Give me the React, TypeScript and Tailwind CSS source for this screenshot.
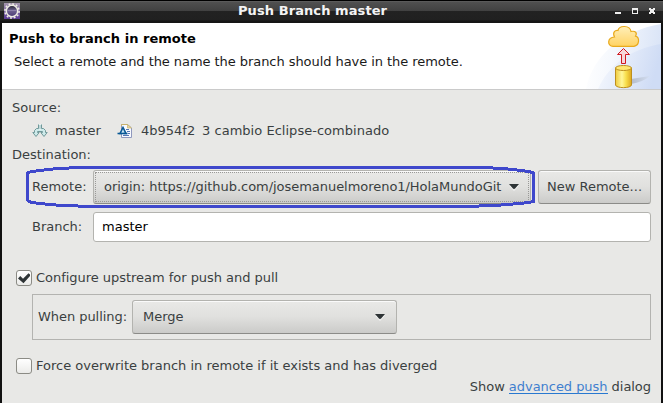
import React from "react";

const font = "font-['DejaVu_Sans',sans-serif]";
const button =
  "box-border flex items-center border border-[#b3b3af] border-b-[#8b8b88] rounded-[3px] bg-linear-to-b from-[#e9e9e7] via-[#e0e0de] to-[#cbcbc9] shadow-[inset_0_1px_0_#fafafa]";

function Row({ h, children, className = "" }: { h: string; children?: React.ReactNode; className?: string }) {
  return <div className={`flex shrink-0 items-center ${h} ${className}`}>{children}</div>;
}

function Arrow() {
  return (
    <svg width="10" height="6" viewBox="0 0 10 6" className="shrink-0 overflow-visible">
      <path d="M1 2L5 6.500L9.500 1.500" stroke="#fff" fill="none" opacity=".7" />
      <path d="M0 0H10L6.300 4.200Q5 5.600 3.700 4.200Z" fill="#2e3436" />
    </svg>
  );
}

function EclipseIcon() {
  return (
    <svg width="16" height="16" viewBox="0 0 16 16">
      <defs>
        <linearGradient id="ecl" x1="0" y1="0" x2="0" y2="1">
          <stop offset="0" stopColor="#a698ae" />
          <stop offset=".5" stopColor="#7c66a0" />
          <stop offset="1" stopColor="#5b3b95" />
        </linearGradient>
        <linearGradient id="lens" x1="0" y1="0" x2="0" y2="1">
          <stop offset="0" stopColor="#24222c" />
          <stop offset=".45" stopColor="#6f6292" />
          <stop offset="1" stopColor="#4b3a74" />
        </linearGradient>
      </defs>
      <rect width="16" height="16" fill="url(#ecl)" />
      <circle cx="8" cy="8" r="7.1" fill="none" stroke="#eeece4" strokeWidth="1.5" strokeDasharray="1.9 1.817" />
      <circle cx="8" cy="8" r="5.7" fill="url(#lens)" stroke="#eeece4" strokeWidth="1.5" />
      <path d="M3.500 7.500h9" stroke="#8d80aa" />
    </svg>
  );
}

function Banner() {
  return (
    <svg width="76" height="66" viewBox="0 0 76 66" className="shrink-0">
      <defs>
        <linearGradient id="bg1" x1="0" x2="1" y1="0" y2=".1">
          <stop offset="0" stopColor="#fff" />
          <stop offset=".4" stopColor="#f5f8fd" />
          <stop offset="1" stopColor="#dbe5f7" />
        </linearGradient>
        <linearGradient id="bg2" x1="0" x2="1" y1="0" y2=".2">
          <stop offset="0" stopColor="#f8fafe" />
          <stop offset="1" stopColor="#cfdcf5" />
        </linearGradient>
        <linearGradient id="cl" x1="0" x2="0" y1="0" y2="1">
          <stop offset="0" stopColor="#ffefb9" />
          <stop offset="1" stopColor="#ffd364" />
        </linearGradient>
        <linearGradient id="cy" x1="0" x2="1">
          <stop offset="0" stopColor="#efcb3f" />
          <stop offset=".4" stopColor="#fff69a" />
          <stop offset=".65" stopColor="#f8df4e" />
          <stop offset="1" stopColor="#dda71d" />
        </linearGradient>
        <linearGradient id="sh">
          <stop offset="0" stopColor="#b4bccb" />
          <stop offset="1" stopColor="#d3def1" />
        </linearGradient>
      </defs>
      <path d="M1 66C6 36 36 7 76 1V66Z" fill="url(#bg1)" />
      <path d="M13 66C23 43 45 26 76 21V66Z" fill="url(#bg2)" />
      <path d="M46 61V56L65 53Q58 59 46 61Z" fill="url(#sh)" />
      <path
        d="M28 23.300C22 23 22 14.500 29.500 14C27 9 30.500 7 33 7.500C34 2 45 2 46 8.500C50.500 7.500 52.500 10 50.500 13.200C55 14.500 54.500 22.500 49 23.300Z"
        fill="url(#cl)" stroke="#e9aa1d" strokeWidth="1.2"
      />
      <path d="M38.500 25.500L44.500 31.500H40.500V40.500H36.500V31.500H32.500Z" fill="#f8d5d8" stroke="#cf1820" />
      <path d="M30.500 45V62C31 65.500 46 65.500 46.500 62V45Z" fill="url(#cy)" stroke="#bd8f20" />
      <ellipse cx="38.500" cy="45" rx="8" ry="2.500" fill="#ffe873" stroke="#bd8f20" />
    </svg>
  );
}

function BranchIcon() {
  return (
    <svg width="16" height="16" viewBox="0 0 16 16">
      <path d="M6.500 1.500V5.500H4.500L2.500 7.500V9.500H.8L4 13.500L7.200 9.500H5.500V8.500H10.500V9.500H8.800L12 13.500L15.200 9.500H13.500V7.500L11.500 5.500H9.500V1.500" fill="#cdeaea" stroke="#71999a" strokeLinejoin="round" />
      <path d="M8 1V7" stroke="#f4fafa" strokeWidth="1" />
      <path d="M8 2V6" stroke="#71999a" strokeWidth=".6" />
    </svg>
  );
}

function CommitIcon() {
  return (
    <svg width="16" height="16" viewBox="0 0 16 16">
      <path d="M4.500 1.500H10.500L14.500 5V14.500H4.500Z" fill="#f8faff" stroke="#8f98bd" />
      <path d="M4.500 3V1.500H10.500" fill="none" stroke="#c9b16b" />
      <path d="M10.500 1.500V5H14.500Z" fill="#ead8a3" stroke="#c9b16b" strokeWidth=".7" />
      <path d="M9 6.500h3M10 8.500h3M6 12.500h6M11 10.500h2" stroke="#5576b5" />
      <path d="M3 10.500L6 4.500L9 10.500Z" fill="#c6e0f0" stroke="#075795" strokeWidth="1.600" />
      <path d="M.5 10.500h4M6.500 10.500h4" stroke="#075795" strokeWidth="1.500" />
    </svg>
  );
}

function CheckBox({ checked = false }: { checked?: boolean }) {
  return (
    <span className="mr-[4px] ml-[14px] flex h-4 w-4 shrink-0 items-center justify-center rounded-[3px] border border-[#8b8b85] bg-linear-to-b from-white to-[#ebebe9]">
      {checked && (
        <svg width="12" height="11" viewBox="0 0 12 11" className="shrink-0">
          <path d="M0 5.500L2.300 3L5 5.800L10.500 .3L12 1.500V3L5.500 10.300Z" fill="#2e3436" />
        </svg>
      )}
    </span>
  );
}

export default function App() {
  return (
    <div className={`relative flex h-[403px] w-[663px] flex-col overflow-hidden bg-[#e8e8e6] text-[13px] leading-[14px] whitespace-pre text-[#3a3f41] ${font}`}>
      <header className="flex h-[23px] shrink-0 items-start border-t border-black bg-[linear-gradient(#656565_0px,#505050_1px,#414141_10px,#222_10px,#202020_19px,#151515_20px)] pl-1 text-white">
        <div className="mt-[2px] w-[234px]"><EclipseIcon /></div>
        <span className="mt-[3px] font-bold tracking-[0.08px] text-[#f4f4f4]">Push Branch master</span>
        <svg className="mt-[7px] mr-[6px] ml-auto" width="42" height="7" viewBox="0 0 42 7">
          <path d="M0 4h6v2H0z" fill="#eee" />
          <path fillRule="evenodd" d="M17 0h6v6h-6zM18 2v3h4V2z" fill="#eee" />
          <path d="M34 0h2v1h2V0h2v2h-1v2h1v2h-2V5h-2v1h-2V4h1V2h-1z" fill="#eee" />
        </svg>
      </header>
      <div className="flex min-h-0 grow border-r-2 border-l-2 border-[#111]">
        <main className="flex grow flex-col">
          <section className="flex h-[67px] shrink-0 justify-between border-b border-[#cacaca] bg-white text-black">
            <div className="flex flex-col">
              <Row h="h-[31px]" className="pl-[7px] font-bold tracking-[0.03px]">Push to branch in remote</Row>
              <Row h="h-[16px]" className="pl-3 tracking-[-0.06px] text-[#1a1a1a]">Select a remote and the name the branch should have in the remote.</Row>
            </div>
            <Banner />
          </section>
          <Row h="h-[36px]" className="pl-[10px]">Source:</Row>
          <Row h="h-[10px]" className="pl-[30px]">
            <BranchIcon />
            <span className="ml-[7px] w-[62px]">master</span>
            <CommitIcon />
            <span className="ml-[8px] w-[61px]">4b954f2</span>
            <span className="tracking-[0.03px]">3 cambio Eclipse-combinado</span>
          </Row>
          <Row h="h-[37px]" className="pl-[10px]">Destination:</Row>
          <Row h="h-[28px]">
            <span className="w-[91px] pl-[30px]">Remote:</span>
            <div className={`${button} relative h-[34px] w-[438px] justify-between pr-[11px] pl-[10px]`}>
              <span className="tracking-[-0.04px]">origin: https://github.com/josemanuelmoreno1/HolaMundoGit</span>
              <Arrow />
              <span className="absolute inset-[1px] border border-dotted border-[#999997]" />
            </div>
            <div className={`${button} ml-[7px] h-[34px] w-[113px] justify-center`}>New Remote...</div>
          </Row>
          <Row h="h-[30px]" className="mt-[11px]">
            <span className="w-[91px] pl-[30px]">Branch:</span>
            <div className="flex h-[30px] w-[558px] items-center rounded-[3px] border border-[#b3b3af] bg-white pl-2 text-black">master</div>
          </Row>
          <Row h="h-4" className="mt-[28px] tracking-[-0.03px]"><CheckBox checked />Configure upstream for push and pull</Row>
          <div className="mt-[8px] ml-[30px] flex h-[46px] w-[619px] shrink-0 items-center border border-[#b3b3b0] pl-[5px]">
            <span className="w-[94px] tracking-[-0.05px]">When pulling:</span>
            <div className={`${button} h-[34px] w-[265px] justify-between pr-[11px] pl-[10px]`}>
              <span>Merge</span><Arrow />
            </div>
          </div>
          <Row h="h-4" className="mt-[18px]"><CheckBox />Force overwrite branch in remote if it exists and has diverged</Row>
          <Row h="h-[14px]" className="mt-[6px] justify-end pr-[10px] tracking-[-0.04px]">
            Show <span className="text-[#3f7fcf] shadow-[0_-1px_0_#2878d0_inset]">advanced push</span> dialog
          </Row>
        </main>
      </div>
      <svg className="pointer-events-none absolute top-0 left-0" width="663" height="403" viewBox="0 0 663 403" fill="none">
        <path
          d="M27.500 173L30 172L39 170.500L55 168.800L78 167.500H482L503 168.500L517 170L529 171.500L533.500 173V201.500L529 202.500L513 204L497 205.300L466 206.500H93L62 205.500L39 203.500L30 202L27.500 200Z"
          stroke="#3f48cc" strokeWidth="3" strokeLinejoin="round" shapeRendering="crispEdges"
        />
      </svg>
    </div>
  );
}
